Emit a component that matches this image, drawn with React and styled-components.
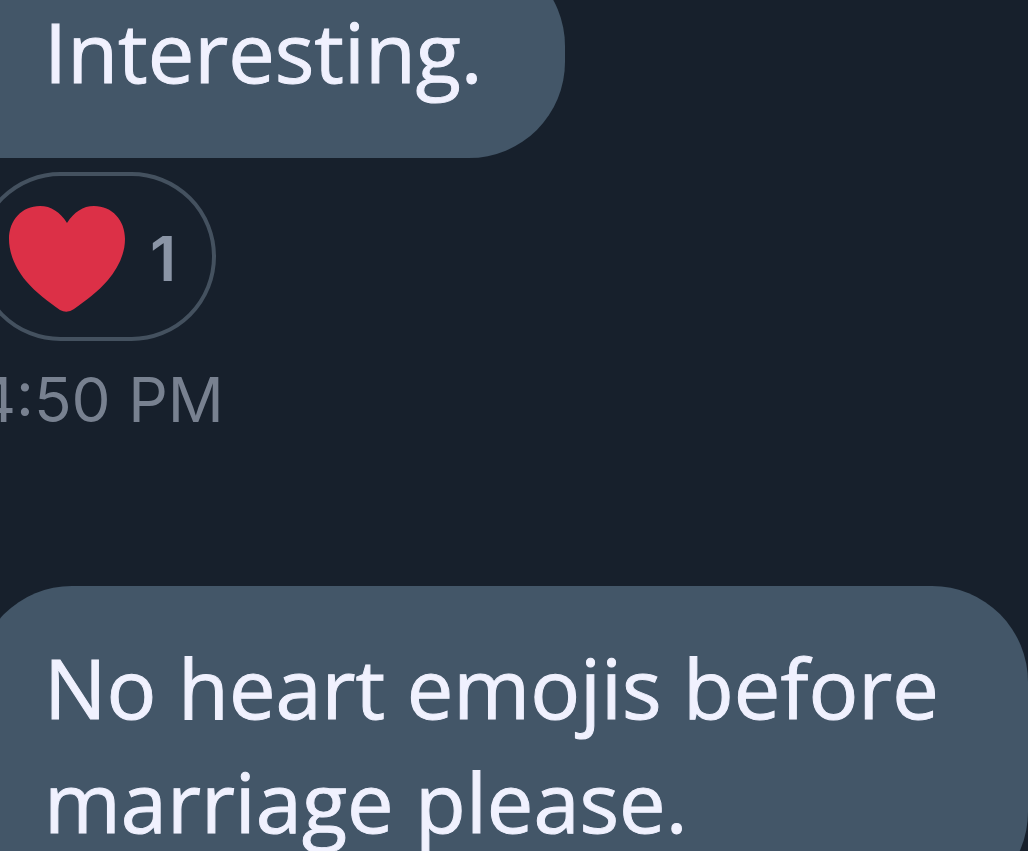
import React from "react";
import styled, { createGlobalStyle } from "styled-components";

const GlobalStyle = createGlobalStyle`
  *, *::before, *::after { box-sizing: border-box; }
  body {
    margin: 0;
    background: #17202c;
    font-family: "Open Sans", "Noto Sans", sans-serif;
    overflow: hidden;
  }
`;

const Conversation = styled.main`
  display: flex;
  flex-direction: column;
  gap: 141px;
  height: 100vh;
  margin-left: -24px;
  overflow: hidden;
`;

const Message = styled.article`
  display: flex;
  flex-direction: column;
  flex-shrink: 0;
  align-items: flex-start;
  gap: 14px;
  margin-top: ${({ $scrolled }) => ($scrolled ? "-50px" : "0")};
`;

const Bubble = styled.p`
  margin: 0;
  padding: 44px 82px 50px 68px;
  border-radius: 96px 96px 96px 16px;
  background: #435668;
  color: #f0f1fe;
  font-size: 83px;
  line-height: 114px;
  -webkit-text-stroke: 1px #f0f1fe;
`;

const Reaction = styled.button`
  display: flex;
  align-items: center;
  gap: 24px;
  height: 169px;
  padding: 4px 36px 0 28px;
  border: 4px solid #44515f;
  border-radius: 85px;
  background: transparent;
  color: #8b95a6;
  font-family: Inter, sans-serif;
  font-size: 62px;
  font-weight: 600;
  line-height: 72px;
`;

const HeartIcon = styled.svg`
  display: block;
  width: 118px;
  height: 108px;
  fill: #dc3047;
`;

const Time = styled.time`
  color: #788190;
  font-family: Inter, sans-serif;
  font-size: 62px;
  line-height: 90px;
`;

function Heart() {
  return (
    <HeartIcon viewBox="0 0 118 108" aria-hidden="true">
      <path d="M59 18C52 7 43 1 32 1C14 1 1 15 1 34C1 49 8 64 18 76C28 88 41 97 52 105Q59 109 66 104C77 96 90 87 100 75C110 63 117 49 117 34C117 15 104 1 86 1C75 1 66 7 59 18Z" />
    </HeartIcon>
  );
}

export default function App() {
  return (
    <>
      <GlobalStyle />
      <Conversation>
        <Message $scrolled>
          <Bubble>Interesting.</Bubble>
          <Reaction type="button">
            <Heart />
            <span>1</span>
          </Reaction>
          <Time>4:50 PM</Time>
        </Message>
        <Message>
          <Bubble>No heart emojis before marriage please.</Bubble>
        </Message>
      </Conversation>
    </>
  );
}
